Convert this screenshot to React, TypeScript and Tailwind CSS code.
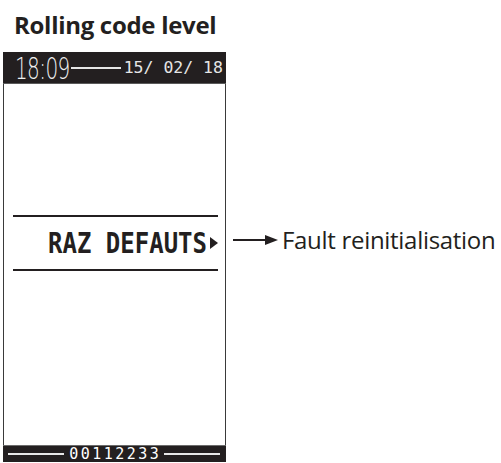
import React from "react";

const sans = { fontFamily: '"Open Sans", "Noto Sans", sans-serif' };
const mono = { fontFamily: '"DejaVu Sans Mono", "Liberation Mono", monospace' };

const Rule = ({ className = "" }: { className?: string }) => (
  <div className={`h-[2px] bg-[#e8e8e8] ${className}`} />
);

const App = () => {
  return (
    <div className="w-[501px] h-[463px] overflow-hidden bg-white flex" style={sans}>
      {/* Device screen */}
      <div className="w-[223px] ml-[3px] flex flex-col shrink-0">
        <div className="h-[52px] flex items-start pt-[13px] pl-[11px]">
          <span className="text-[24px] font-bold leading-none whitespace-nowrap tracking-[-0.3px] text-[#231f20]">
            Rolling code level
          </span>
        </div>

        <div className="h-[32px] bg-[#231f20] border-b border-[#5a5a5a] flex items-center pl-[12px] whitespace-nowrap">
          <span
            className="inline-block text-[#f0f0f0] text-[20px] font-extralight leading-none scale-y-150 tracking-[-0.6px] shrink-0"
            style={{ fontFamily: '"DejaVu Sans", sans-serif' }}
          >
            18:09
          </span>
          <div className="h-[2px] w-[50px] bg-[#e6e6e6] ml-[1px] mt-[1px] shrink-0" />
          <span
            className="text-[#e6e6e6] text-[16.5px] leading-none ml-[3px] mt-[1px] shrink-0"
            style={mono}
          >
            15/ 02/ 18
          </span>
        </div>

        <div className="h-[361px] border-x border-[#3a3a3a] bg-white flex flex-col">
          <div className="h-[131px]" />
          <div className="h-[2px] bg-[#231f20] ml-[9px] mr-[7px]" />
          <div className="h-[52px] flex items-center justify-end pr-[7px]">
            <span
              className="inline-block text-[24px] font-bold leading-none text-[#231f20] scale-y-[1.2] whitespace-nowrap"
              style={mono}
            >
              RAZ DEFAUTS
            </span>
            <svg width="8" height="12" viewBox="0 0 8 12" className="ml-[3px]">
              <path d="M0 0 L8 6 L0 12 Z" fill="#231f20" />
            </svg>
          </div>
          <div className="h-[2px] bg-[#231f20] ml-[9px] mr-[7px]" />
        </div>

        <div className="h-[17px] bg-[#231f20] border-t border-[#6b6b6b] flex items-center pl-[5px] pr-[6px] gap-[5px]">
          <Rule className="flex-1" />
          <span className="text-white text-[15px] leading-none tracking-[2.5px] mr-[-2.5px] mt-[1px]" style={mono}>
            00112233
          </span>
          <Rule className="flex-1" />
        </div>
      </div>

      {/* Annotation */}
      <div className="flex items-center self-start mt-[228px] pl-[7px]">
        <div className="flex items-center">
          <div className="h-[2px] w-[32px] bg-[#231f20]" />
          <svg width="13" height="10" viewBox="0 0 13 10">
            <path d="M0 0 L13 5 L0 10 Z" fill="#231f20" />
          </svg>
        </div>
        <span className="ml-[4px] text-[24px] leading-none whitespace-nowrap text-[#231f20] tracking-[-0.3px]">
          Fault reinitialisation
        </span>
      </div>
    </div>
  );
};

export default App;
